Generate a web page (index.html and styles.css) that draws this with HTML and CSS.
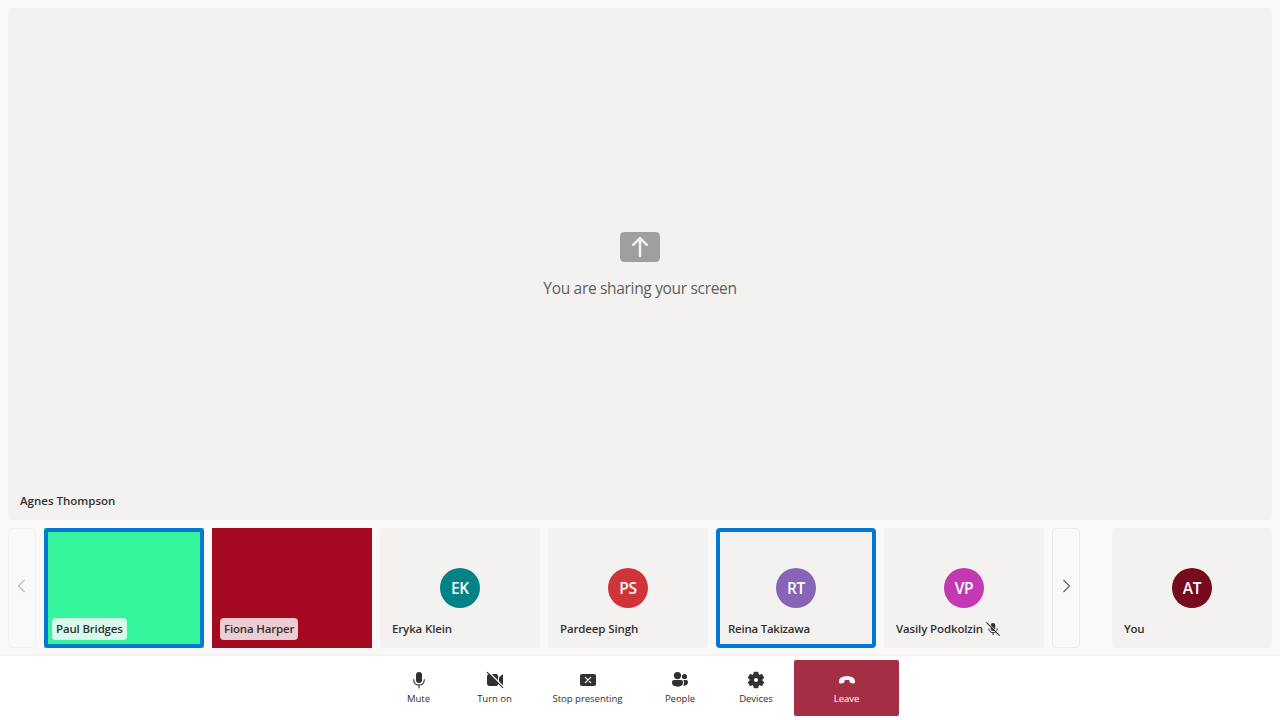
FILE: index.html
```html
<!DOCTYPE html>
<html lang="en">
<head>
<meta charset="utf-8">
<title>Call</title>
<link rel="stylesheet" href="styles.css">
</head>
<body>
<div class="call">
  <main class="gallery">
    <section class="stage">
      <div class="sharing">
        <svg class="share-icon" width="40" height="30" viewBox="0 0 40 30"><rect width="40" height="30" rx="4.500" fill="#a09f9e"/><path d="M20 24V6.500M13.200 12.800L20 6.200L26.800 12.800" fill="none" stroke="#f3f2f1" stroke-width="2.500" stroke-linecap="round" stroke-linejoin="round"/></svg>
        <p class="sharing-text">You are sharing your screen</p>
      </div>
      <span class="name name-wide">Agnes Thompson</span>
    </section>
    <section class="strip">
      <button class="nav nav-prev"><svg width="16" height="16" viewBox="0 0 16 16"><path d="M10.500 2L4.500 8L10.500 14"/></svg></button>
      <div class="tile green"><span class="frame"></span><span class="name label">Paul Bridges</span></div>
      <div class="tile red"><span class="name label">Fiona Harper</span></div>
      <div class="tile"><span class="avatar teal">EK</span><span class="name">Eryka Klein</span></div>
      <div class="tile"><span class="avatar coral">PS</span><span class="name">Pardeep Singh</span></div>
      <div class="tile"><span class="frame"></span><span class="avatar violet">RT</span><span class="name name-tight">Reina Takizawa</span></div>
      <div class="tile"><span class="avatar magenta">VP</span><span class="name">Vasily Podkolzin<svg class="muted" width="14" height="14" viewBox="0 0 14 14"><rect x="4.800" y="1" width="4.400" height="8" rx="2.200" fill="#323130"/><path d="M2.800 6.500C2.800 9 4.500 10.700 7 10.700S11.200 9 11.200 6.500M7 10.700V13" fill="none" stroke="#323130"/><path d="M1.200 0L14 12.800" stroke="#f3f2f1" stroke-width="1"/><path d="M.4 .4L13.600 13.600" stroke="#323130" stroke-width="1.100"/></svg></span></div>
      <button class="nav nav-next"><svg width="16" height="16" viewBox="0 0 16 16"><path d="M5.500 2L11.500 8L5.500 14"/></svg></button>
      <div class="tile self"><span class="avatar maroon">AT</span><span class="name name-tight">You</span></div>
    </section>
  </main>
  <footer class="controls">
    <button class="control mute"><svg width="20" height="20" viewBox="0 0 20 20"><rect x="7" y="2" width="6" height="11" rx="3" fill="#323130"/><path d="M4.700 9.500C4.700 13 6.800 15 10 15S15.300 13 15.300 9.500M10 15V18" fill="none" stroke="#323130" stroke-width="1.100" stroke-linecap="round"/></svg><span>Mute</span></button>
    <button class="control camera"><svg width="20" height="20" viewBox="0 0 20 20"><path d="M4.500 4H11C12.400 4 13 4.800 13 6V14C13 15.200 12.400 16 11 16H4.500C3 16 2 15 2 13.500V6.500C2 5 3 4 4.500 4ZM14 7.300L17 4.700C17.500 4.300 18 4.500 18 5V15C18 15.500 17.500 15.700 17 15.300L14 12.700Z" fill="#323130"/><path d="M3 1.300L18.700 17" stroke="#fff" stroke-width="1.300"/><path d="M2.300 2.300L17.700 17.700" stroke="#323130" stroke-width="1.100" stroke-linecap="round"/></svg><span>Turn on</span></button>
    <button class="control present"><svg width="20" height="20" viewBox="0 0 20 20"><rect x="2" y="4" width="16" height="12" rx="2" fill="#323130"/><path d="M7.300 7.300L12.700 12.700M12.700 7.300L7.300 12.700" stroke="#fff" stroke-width="1.100" stroke-linecap="round"/></svg><span>Stop presenting</span></button>
    <button class="control people"><svg width="20" height="20" viewBox="0 0 20 20" fill="#323130"><circle cx="7.500" cy="5.600" r="3.600"/><circle cx="14.500" cy="6.500" r="2.600"/><path d="M4 10H11C12 10 13 10.800 13 12V12.500C13 15 10.800 16.700 7.500 16.700S2 15 2 12.500V12C2 10.800 3 10 4 10ZM13.200 10H16C17.300 10 18 10.800 18 12C18 14.500 16.300 16 13 15.800C13.700 15 14 13.800 14 12.500V12C14 11.200 13.700 10.500 13.200 10Z"/></svg><span>People</span></button>
    <button class="control devices"><svg width="20" height="20" viewBox="0 0 20 20"><g fill="#323130"><circle cx="10" cy="10" r="6.500"/><rect x="7.500" y="1.700" width="5" height="16.600" rx="1.300"/><rect x="7.500" y="1.700" width="5" height="16.600" rx="1.300" transform="rotate(60 10 10)"/><rect x="7.500" y="1.700" width="5" height="16.600" rx="1.300" transform="rotate(120 10 10)"/></g><circle cx="10" cy="10" r="2" fill="#fff"/></svg><span>Devices</span></button>
    <button class="control leave"><svg width="20" height="20" viewBox="0 0 20 20"><path d="M2 11.500C1.900 8 5.200 6.300 10 6.300S18.100 8 18 11.500C18 13.300 17.100 13.700 15.700 13.400L14 13C12.900 12.800 12.500 12.300 12.500 11.300V10.300C11.500 9.800 8.500 9.800 7.500 10.300V11.300C7.500 12.300 7.100 12.800 6 13L4.300 13.400C2.900 13.700 2 13.300 2 11.500Z" fill="#fff"/></svg><span>Leave</span></button>
  </footer>
</div>
</body>
</html>
```
FILE: styles.css
```css
* { box-sizing: border-box; }
body { margin: 0; background: #faf9f8; color: #323130; font-family: "Open Sans", "Noto Sans", sans-serif; }
button { margin: 0; padding: 0; border: 0; background: none; color: inherit; font: inherit; }
.call { display: flex; flex-direction: column; width: 1280px; height: 720px; overflow: hidden; }
.gallery { display: flex; flex: 1; flex-direction: column; gap: 8px; padding: 8px; }
.stage { display: grid; flex: 1; border-radius: 4px; background: #f3f2f1; }
.stage > * { grid-area: 1 / 1; }
.sharing { display: flex; flex-direction: column; align-items: center; padding-top: 224px; }
.share-icon { display: block; }
.sharing-text { margin: 15px 0 0; color: #605e5c; font-size: 15.5px; line-height: 22px; letter-spacing: -0.32px; white-space: nowrap; }
.name { align-self: end; justify-self: start; display: flex; align-items: center; height: 22px; margin: 0 0 8px 8px; padding: 0 4px; border-radius: 4px; font-size: 11.5px; font-weight: 600; line-height: 22px; letter-spacing: -0.13px; white-space: nowrap; }
.name-wide { letter-spacing: 0; }
.name-tight { letter-spacing: -0.25px; }
.label { background: rgba(255, 255, 255, .8); letter-spacing: -0.17px; }
.strip { display: flex; gap: 8px; height: 120px; }
.nav { display: flex; align-items: center; justify-content: center; width: 28px; padding-bottom: 4px; border: 1px solid #edebe9; border-radius: 4px; }
.nav path { fill: none; stroke: #605e5c; stroke-width: 1.1; }
.nav-prev { border-color: #f3f2f1; }
.nav-prev path { stroke: #b9b7b5; }
.tile { display: grid; width: 160px; border-radius: 4px; background: #f3f2f1; }
.tile > * { grid-area: 1 / 1; }
.frame { border: 4px solid #0078d4; border-radius: 4px; }
.green { background: #34f59c; border-radius: 0; }
.red { background: #a50821; border-radius: 0; }
.self { margin-left: auto; }
.avatar { place-self: center; width: 40px; height: 40px; border-radius: 50%; color: #fff; font-size: 15.5px; font-weight: 600; line-height: 40px; letter-spacing: -0.3px; text-align: center; }
.teal { background: #038387; }
.coral { background: #d13438; }
.violet { background: #8764b8; }
.magenta { background: #c239b3; }
.maroon { background: #750b1c; }
.muted { margin-left: 3px; }
.controls { display: flex; justify-content: center; height: 64px; padding: 4px 0; background: #fff; box-shadow: 0 0 4px rgba(0, 0, 0, .07); }
.control { display: flex; flex-direction: column; align-items: center; height: 56px; padding-top: 10px; font-size: 9.6px; line-height: 14px; letter-spacing: -0.06px; white-space: nowrap; }
.control span { margin-top: 2px; }
.mute { width: 75px; }
.camera { width: 77px; }
.present { width: 109px; }
.people, .devices { width: 76px; }
.leave { width: 105px; border-radius: 2px; background: #a42e43; color: #fff; }
```
